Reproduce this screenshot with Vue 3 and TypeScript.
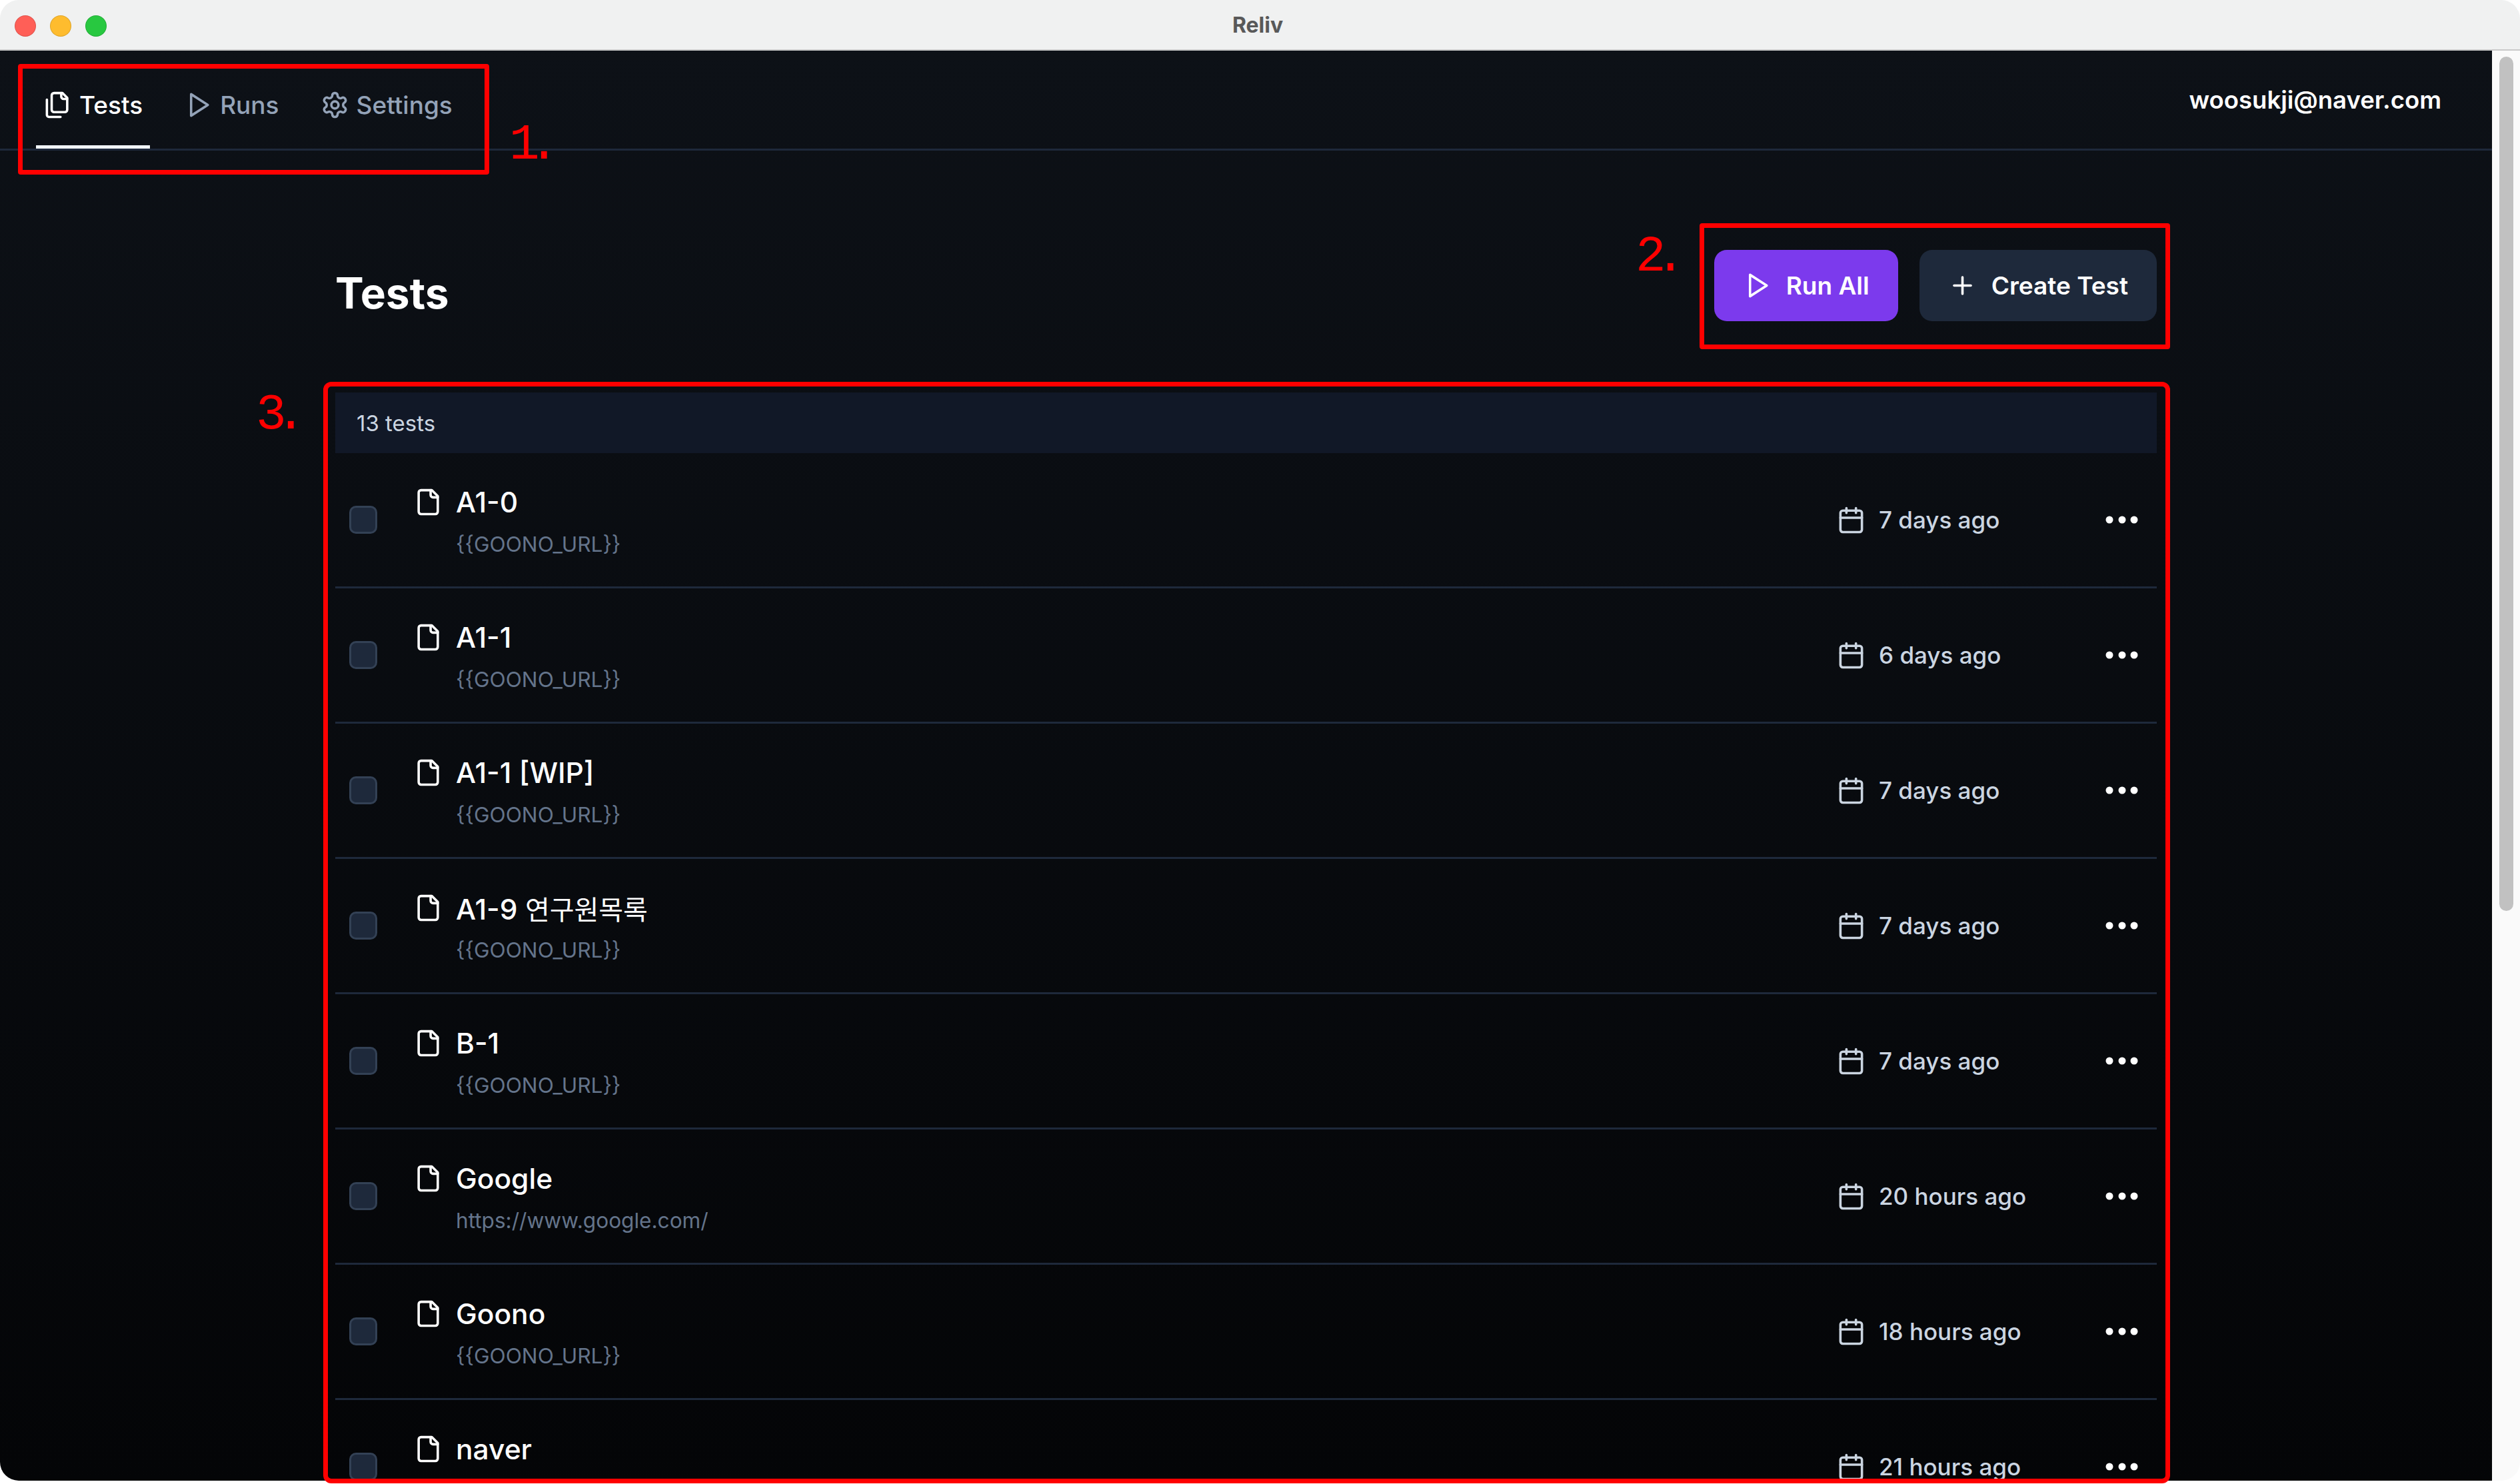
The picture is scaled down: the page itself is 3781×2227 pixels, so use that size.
<script setup lang="ts">
interface TestRow {
  name: string;
  korean?: string;
  url: string;
  updated: string;
}

const tests: TestRow[] = [
  { name: 'A1-0', url: '{{GOONO_URL}}', updated: '7 days ago' },
  { name: 'A1-1', url: '{{GOONO_URL}}', updated: '6 days ago' },
  { name: 'A1-1 [WIP]', url: '{{GOONO_URL}}', updated: '7 days ago' },
  { name: 'A1-9', korean: '연구원목록', url: '{{GOONO_URL}}', updated: '7 days ago' },
  { name: 'B-1', url: '{{GOONO_URL}}', updated: '7 days ago' },
  { name: 'Google', url: 'https://www.google.com/', updated: '20 hours ago' },
  { name: 'Goono', url: '{{GOONO_URL}}', updated: '18 hours ago' },
  { name: 'naver', url: '', updated: '21 hours ago' },
];
</script>

<template>
  <div class="screen">
    <div class="window">
      <header class="titlebar">
        <div class="lights">
          <span class="light red"></span>
          <span class="light yellow"></span>
          <span class="light green"></span>
        </div>
        <span class="app-name">Reliv</span>
      </header>

      <div class="body">
        <main class="main">
          <nav class="nav">
            <div class="tabs">
              <a class="tab active">
                <svg class="icon" viewBox="0 0 24 24">
                  <path d="M20 7h-3a2 2 0 0 1-2-2V2" />
                  <path d="M9 18a2 2 0 0 1-2-2V4a2 2 0 0 1 2-2h7l4 4v10a2 2 0 0 1-2 2Z" />
                  <path d="M3 7.6v12.8A1.6 1.6 0 0 0 4.6 22h9.8" />
                </svg>
                Tests
              </a>
              <a class="tab">
                <svg class="icon" viewBox="0 0 24 24"><polygon points="6 3 20 12 6 21 6 3" /></svg>
                Runs
              </a>
              <a class="tab">
                <svg class="icon" viewBox="0 0 24 24">
                  <path d="M12.22 2h-.44a2 2 0 0 0-2 2v.18a2 2 0 0 1-1 1.73l-.43.25a2 2 0 0 1-2 0l-.15-.08a2 2 0 0 0-2.73.73l-.22.38a2 2 0 0 0 .73 2.73l.15.1a2 2 0 0 1 1 1.72v.51a2 2 0 0 1-1 1.74l-.15.09a2 2 0 0 0-.73 2.73l.22.38a2 2 0 0 0 2.73.73l.15-.08a2 2 0 0 1 2 0l.43.25a2 2 0 0 1 1 1.73V20a2 2 0 0 0 2 2h.44a2 2 0 0 0 2-2v-.18a2 2 0 0 1 1-1.73l.43-.25a2 2 0 0 1 2 0l.15.08a2 2 0 0 0 2.73-.73l.22-.39a2 2 0 0 0-.73-2.73l-.15-.08a2 2 0 0 1-1-1.74v-.5a2 2 0 0 1 1-1.74l.15-.09a2 2 0 0 0 .73-2.73l-.22-.38a2 2 0 0 0-2.73-.73l-.15.08a2 2 0 0 1-2 0l-.43-.25a2 2 0 0 1-1-1.73V4a2 2 0 0 0-2-2z" />
                  <circle cx="12" cy="12" r="3" />
                </svg>
                Settings
              </a>
            </div>
            <span class="email">woosukji@naver.com</span>
          </nav>

          <section class="content">
            <div class="page-head">
              <h1 class="page-title">Tests</h1>
              <div class="actions">
                <button class="btn primary">
                  <svg class="icon" viewBox="0 0 24 24"><polygon points="6 3 20 12 6 21 6 3" /></svg>
                  Run All
                </button>
                <button class="btn secondary">
                  <svg class="icon" viewBox="0 0 24 24"><path d="M5 12h14" /><path d="M12 5v14" /></svg>
                  Create Test
                </button>
              </div>
            </div>

            <div class="list-head">13 tests</div>
            <div v-for="(test, index) in tests" :key="index" class="row">
              <span class="checkbox"></span>
              <div class="info">
                <div class="name">
                  <svg class="icon" viewBox="0 0 24 24">
                    <path d="M15 2H6a2 2 0 0 0-2 2v16a2 2 0 0 0 2 2h12a2 2 0 0 0 2-2V7Z" />
                    <path d="M14 2v4a2 2 0 0 0 2 2h4" />
                  </svg>
                  <span>{{ test.name }} <span v-if="test.korean" class="ko">{{ test.korean }}</span></span>
                </div>
                <div class="url">{{ test.url }}</div>
              </div>
              <div class="date">
                <svg class="icon" viewBox="0 0 24 24">
                  <path d="M8 2v4" />
                  <path d="M16 2v4" />
                  <rect x="3" y="4" width="18" height="18" rx="2" />
                  <path d="M3 10h18" />
                </svg>
                {{ test.updated }}
              </div>
              <svg class="dots" viewBox="0 0 58 12">
                <circle cx="10" cy="6" r="5.5" />
                <circle cx="29" cy="6" r="5.5" />
                <circle cx="47" cy="6" r="5.5" />
              </svg>
            </div>
          </section>
        </main>

        <aside class="scrollbar"><div class="thumb"></div></aside>
      </div>
    </div>

    <!-- red annotations drawn over the screenshot -->
    <div class="mark box-1"></div>
    <span class="mark-label label-1">1.</span>
    <div class="mark box-2"></div>
    <span class="mark-label label-2">2.</span>
    <div class="mark box-3"></div>
    <span class="mark-label label-3">3.</span>
  </div>
</template>

<style>
html,
body {
  margin: 0;
  background: #fff;
  overflow: hidden;
}
</style>

<style scoped>
.screen {
  position: relative;
  width: 3781px;
  height: 2227px;
  overflow: hidden;
}

.window {
  width: 3781px;
  height: 2222px;
  border-radius: 28px;
  overflow: hidden;
  display: flex;
  flex-direction: column;
  font-family: Inter, 'Noto Sans CJK KR', sans-serif;
}

.titlebar {
  position: relative;
  flex: none;
  height: 76px;
  box-sizing: border-box;
  background: #f0f1f1;
  border-bottom: 2px solid #c9c9c9;
  display: flex;
  align-items: center;
  justify-content: center;
}

.lights {
  position: absolute;
  left: 22px;
  top: 23px;
  display: flex;
  gap: 21px;
}

.light {
  width: 32px;
  height: 32px;
  box-sizing: border-box;
  border-radius: 50%;
  border: 1px solid rgba(0, 0, 0, 0.12);
}

.red { background: #ff5f57; }
.yellow { background: #febc2e; }
.green { background: #28c840; }

.app-name {
  font-size: 32px;
  font-weight: 700;
  color: #595959;
  margin-left: -7px;
}

.body {
  flex: 1;
  min-height: 0;
  display: flex;
}

.main {
  flex: 1;
  min-width: 0;
  background: linear-gradient(#0d1117, #040507);
  color: #fff;
  overflow: hidden;
}

.icon {
  flex: none;
  width: 43px;
  height: 43px;
  fill: none;
  stroke: currentColor;
  stroke-width: 2;
  stroke-linecap: round;
  stroke-linejoin: round;
}

.nav {
  height: 150px;
  box-sizing: border-box;
  border-bottom: 3px solid #1e293b;
  padding: 0 76px 0 54px;
  display: flex;
  align-items: center;
  justify-content: space-between;
}

.tabs {
  align-self: flex-start;
  display: flex;
  gap: 40px;
}

.tab {
  height: 147px;
  box-sizing: border-box;
  padding: 20px 11px 5px;
  display: flex;
  align-items: center;
  gap: 11px;
  font-size: 37px;
  font-weight: 500;
  color: #94a3b8;
}

.tab.active {
  color: #fff;
  border-bottom: 5px solid #f1f5f9;
  padding-bottom: 0;
}

.email {
  font-size: 36.5px;
  font-weight: 600;
}

.content {
  width: 2733px;
  margin: 0 auto;
}

.page-head {
  padding-top: 149px;
  display: flex;
  align-items: center;
  justify-content: space-between;
}

.page-title {
  margin: 0;
  padding-top: 21px;
  font-size: 64px;
  font-weight: 700;
}

.actions {
  display: flex;
  gap: 32px;
}

.btn {
  height: 107px;
  padding: 0 43px;
  border: none;
  border-radius: 19px;
  display: flex;
  align-items: center;
  gap: 22px;
  font-family: inherit;
  font-size: 37px;
  font-weight: 600;
  color: #fff;
}

.primary { background: #7c3aed; }
.secondary { background: #1e293b; }

.list-head {
  margin-top: 107px;
  height: 91px;
  padding-left: 32px;
  display: flex;
  align-items: center;
  background: #111827;
  font-size: 33px;
  color: #cbd5e1;
}

.row {
  height: 203px;
  box-sizing: border-box;
  padding-left: 21px;
  border-bottom: 3px solid #1e293b;
  display: flex;
  align-items: center;
}

.checkbox {
  flex: none;
  width: 42px;
  height: 42px;
  box-sizing: border-box;
  border: 3px solid #334155;
  border-radius: 10px;
  background: #1e293b;
  margin-right: 55px;
}

.info {
  flex: 1;
  min-width: 0;
  padding-top: 4px;
}

.name {
  height: 52px;
  display: flex;
  align-items: center;
  gap: 20px;
  font-size: 42.5px;
  font-weight: 500;
}

.ko {
  font-size: 40px;
  font-weight: 400;
}

.url {
  margin-top: 17px;
  padding-left: 63px;
  min-height: 40px;
  line-height: 40px;
  font-size: 31.6px;
  color: #64748b;
}

.date {
  flex: none;
  width: 399px;
  display: flex;
  align-items: center;
  gap: 20px;
  font-size: 35px;
  font-weight: 500;
  color: #cbd5e1;
}

.dots {
  flex: none;
  width: 58px;
  height: 12px;
  margin-right: 23px;
  fill: #fff;
}

.scrollbar {
  flex: none;
  width: 42px;
  background: #fafafa;
  padding-top: 9px;
  box-sizing: border-box;
}

.thumb {
  width: 21px;
  height: 1282px;
  margin-left: 11px;
  border-radius: 11px;
  background: #c1c1c1;
}

.mark {
  position: absolute;
  box-sizing: border-box;
  border: 7px solid #f00;
  border-radius: 4px;
}

.box-1 { left: 27px; top: 96px; width: 707px; height: 166px; }
.box-2 { left: 2550px; top: 335px; width: 706px; height: 189px; }
.box-3 { left: 485px; top: 573px; width: 2771px; height: 1653px; border-radius: 12px; }

.mark-label {
  position: absolute;
  color: #f00;
  font-family: 'Liberation Mono', monospace;
  font-size: 76px;
  line-height: 76px;
  letter-spacing: -16px;
}

.label-1 { left: 764px; top: 180px; }
.label-2 { left: 2454px; top: 348px; }
.label-3 { left: 384px; top: 585px; }
</style>
